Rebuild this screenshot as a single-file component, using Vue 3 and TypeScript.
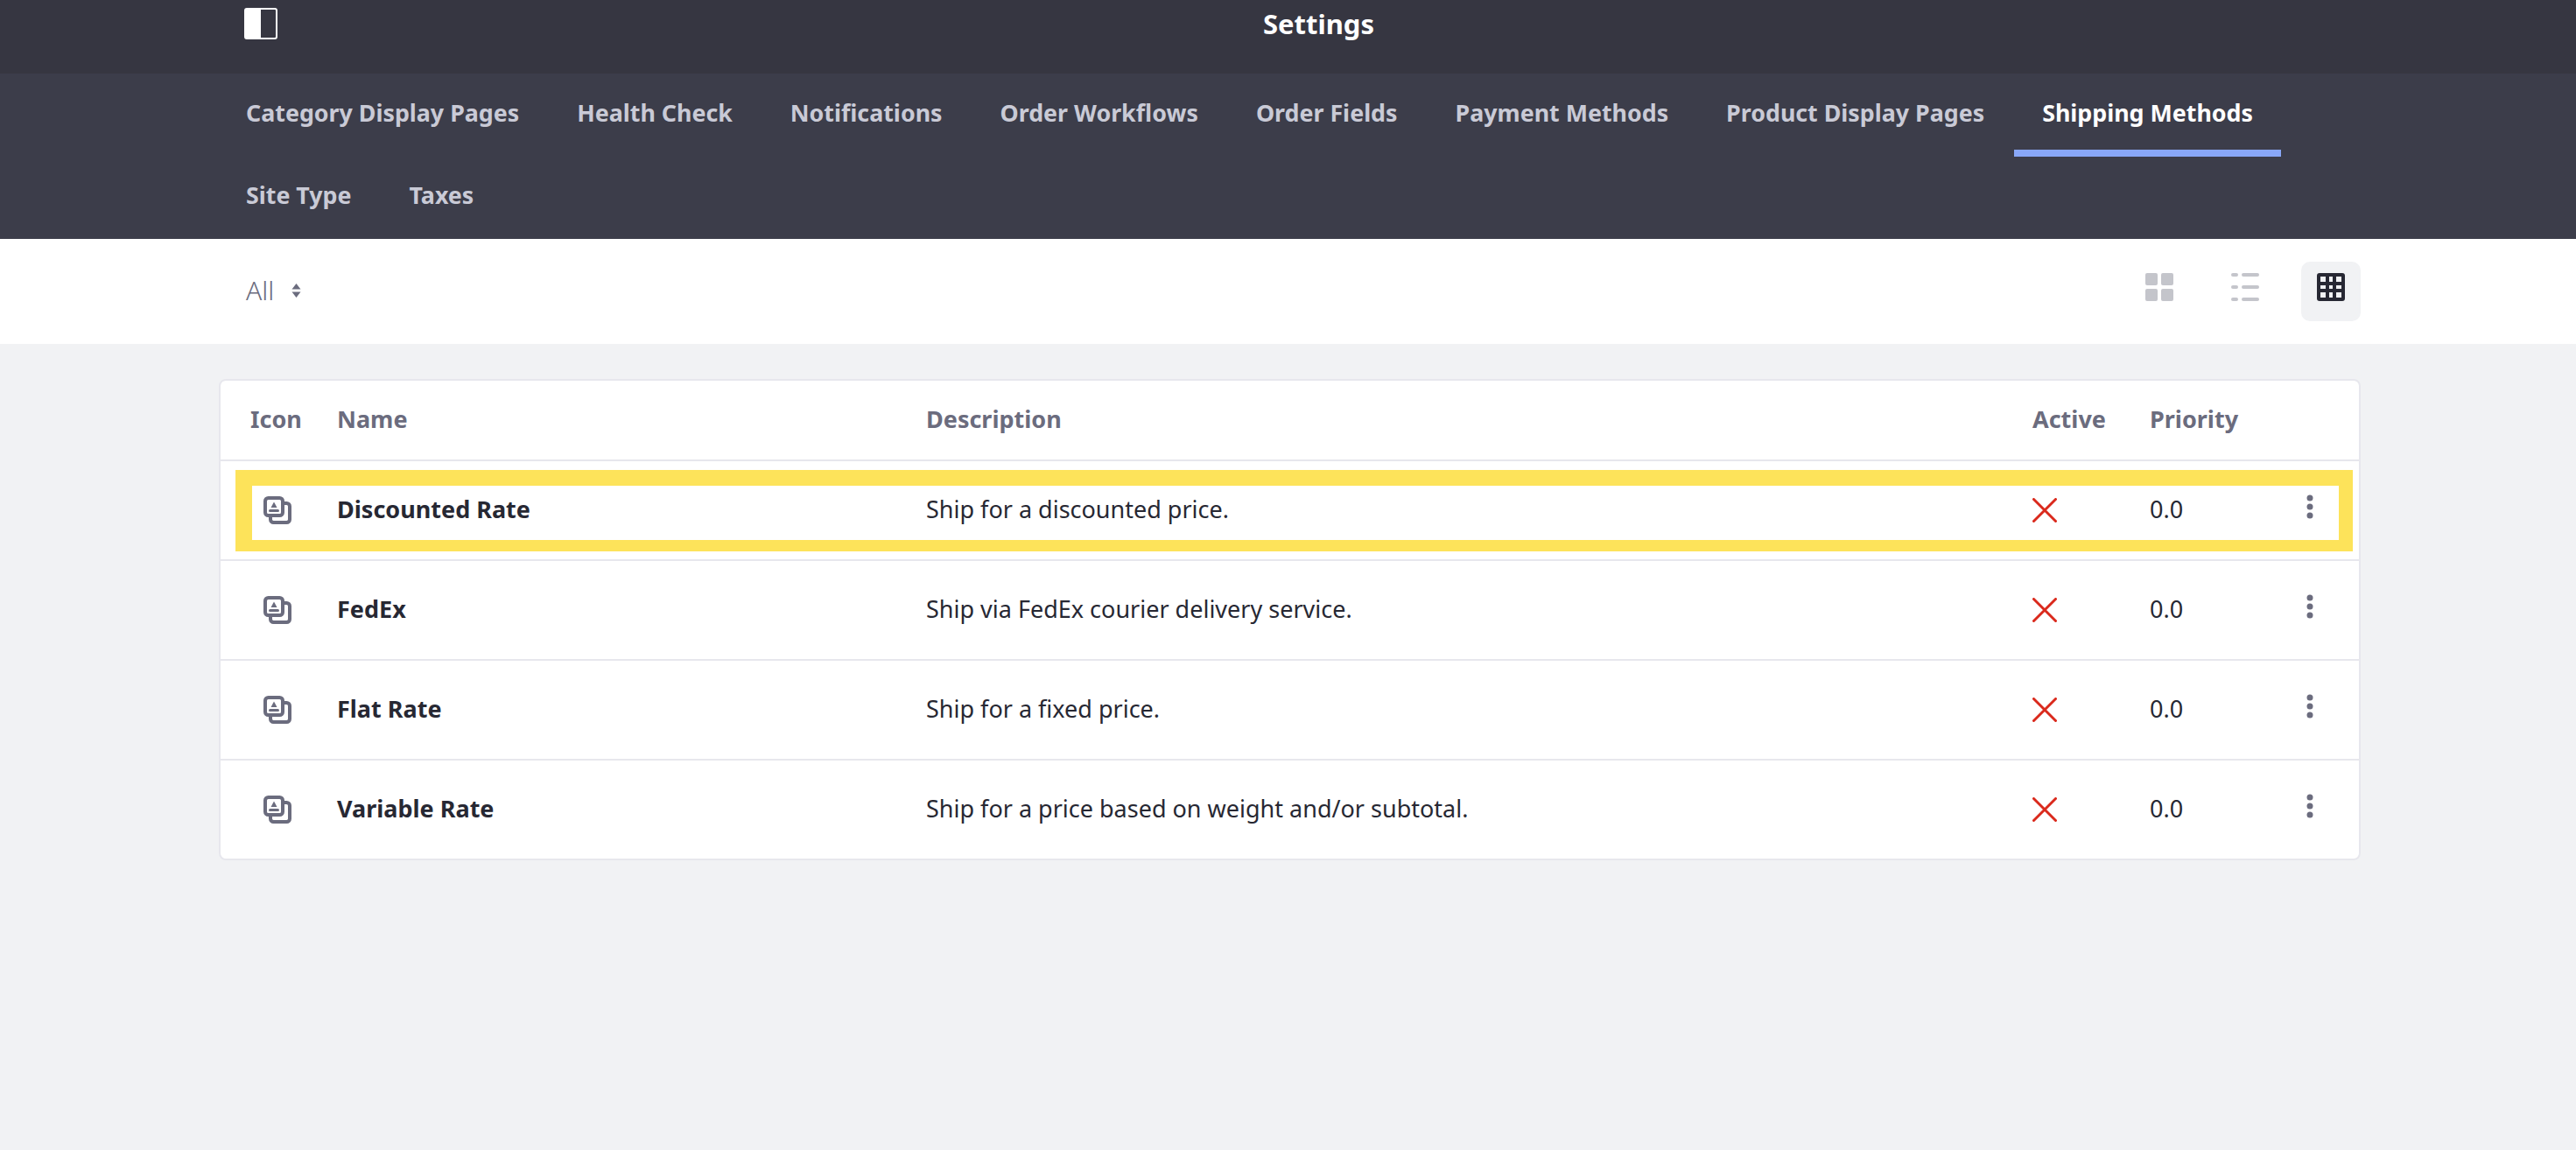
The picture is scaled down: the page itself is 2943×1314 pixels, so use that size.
<template>
  <div class="page">
    <header class="topbar">
      <svg class="sidebar-icon" width="38" height="36" viewBox="0 0 38 36">
        <rect x="1" y="1" width="36" height="34" rx="2" fill="none" stroke="#fff" stroke-width="2" />
        <rect x="1" y="1" width="18" height="34" fill="#fff" />
      </svg>
      <h1 class="title">Settings</h1>
    </header>

    <nav class="tabs">
      <a
        v-for="tab in tabs"
        :key="tab"
        class="tab"
        :class="{ active: tab === 'Shipping Methods' }"
      >{{ tab }}</a>
    </nav>

    <div class="toolbar">
      <div class="filter">
        <span>All</span>
        <svg width="11" height="16" viewBox="0 0 11 16">
          <path d="M5.5 0 L10.5 6.5 H0.5 Z M5.5 16 L10.5 9.5 H0.5 Z" fill="#6b6c7e" />
        </svg>
      </div>
      <div class="views">
        <button class="view">
          <svg width="32" height="32" viewBox="0 0 32 32" fill="#c4c5cb">
            <rect width="14" height="14" rx="2" />
            <rect x="18" width="14" height="14" rx="2" />
            <rect y="18" width="14" height="14" rx="2" />
            <rect x="18" y="18" width="14" height="14" rx="2" />
          </svg>
        </button>
        <button class="view">
          <svg width="32" height="32" viewBox="0 0 32 32" fill="#c4c5cb">
            <rect width="8" height="4" rx="2" />
            <rect x="12" width="20" height="4" rx="2" />
            <rect y="14" width="8" height="4" rx="2" />
            <rect x="12" y="14" width="20" height="4" rx="2" />
            <rect y="28" width="8" height="4" rx="2" />
            <rect x="12" y="28" width="20" height="4" rx="2" />
          </svg>
        </button>
        <button class="view selected">
          <svg width="32" height="32" viewBox="0 0 32 32">
            <rect width="32" height="32" rx="3" fill="#272833" />
            <g fill="#f1f2f4">
              <rect x="4" y="4" width="6" height="6" />
              <rect x="14" y="4" width="4" height="6" />
              <rect x="22" y="4" width="6" height="6" />
              <rect x="4" y="14" width="6" height="4" />
              <rect x="14" y="14" width="4" height="4" />
              <rect x="22" y="14" width="6" height="4" />
              <rect x="4" y="22" width="6" height="6" />
              <rect x="14" y="22" width="4" height="6" />
              <rect x="22" y="22" width="6" height="6" />
            </g>
          </svg>
        </button>
      </div>
    </div>

    <main class="content">
      <div class="card">
        <div class="row head">
          <span>Icon</span>
          <span class="name-col">Name</span>
          <span>Description</span>
          <span>Active</span>
          <span class="prio-col">Priority</span>
        </div>
        <div v-for="method in methods" :key="method.name" class="row">
          <svg class="method-icon" width="32" height="32" viewBox="0 0 32 32">
            <rect x="2" y="2" width="20" height="20" rx="3.5" fill="none" stroke="#6b6c7e" stroke-width="4" />
            <path d="M24 8 H26.5 A3.5 3.5 0 0 1 30 11.5 V26.5 A3.5 3.5 0 0 1 26.5 30 H11.5 A3.5 3.5 0 0 1 8 26.5 V24" fill="none" stroke="#6b6c7e" stroke-width="4" />
            <path d="M12 6.5 L15.5 13 H8.5 Z" fill="#6b6c7e" />
            <rect x="6" y="15" width="12" height="3" rx="1.5" fill="#6b6c7e" />
          </svg>
          <strong class="name name-col">{{ method.name }}</strong>
          <span class="desc">{{ method.description }}</span>
          <svg width="28" height="28" viewBox="0 0 28 28">
            <path d="M1.5 1.5 L26.5 26.5 M26.5 1.5 L1.5 26.5" stroke="#da291c" stroke-width="3" stroke-linecap="round" />
          </svg>
          <span class="desc prio-col">0.0</span>
          <svg class="kebab" width="8" height="28" viewBox="0 0 8 28" fill="#6b6c7e">
            <circle cx="4" cy="4" r="3.5" />
            <circle cx="4" cy="14" r="3.5" />
            <circle cx="4" cy="24" r="3.5" />
          </svg>
        </div>
        <div class="highlight"></div>
      </div>
    </main>
  </div>
</template>

<script setup lang="ts">
interface ShippingMethod {
  name: string;
  description: string;
}

const tabs: string[] = [
  'Category Display Pages',
  'Health Check',
  'Notifications',
  'Order Workflows',
  'Order Fields',
  'Payment Methods',
  'Product Display Pages',
  'Shipping Methods',
  'Site Type',
  'Taxes',
];

const methods: ShippingMethod[] = [
  { name: 'Discounted Rate', description: 'Ship for a discounted price.' },
  { name: 'FedEx', description: 'Ship via FedEx courier delivery service.' },
  { name: 'Flat Rate', description: 'Ship for a fixed price.' },
  { name: 'Variable Rate', description: 'Ship for a price based on weight and/or subtotal.' },
];
</script>

<style>
html,
body {
  margin: 0;
  background: #f1f2f4;
}
</style>

<style scoped>
.page {
  min-height: 1314px;
  background: #f1f2f4;
  font-family: "Noto Sans", "Open Sans", sans-serif;
  font-size: 27px;
  color: #272833;
}

.topbar {
  height: 84px;
  box-sizing: border-box;
  padding: 9px 247px 0 279px;
  display: flex;
  align-items: flex-start;
  background: #363641;
}

.title {
  flex: 1;
  margin: 0;
  text-align: center;
  color: #fff;
  font-size: 31px;
  font-weight: 700;
  line-height: 37px;
}

.tabs {
  height: 189px;
  box-sizing: border-box;
  padding: 1px 247px 0 249px;
  display: flex;
  flex-wrap: wrap;
  align-content: flex-start;
  column-gap: 2px;
  background: #3c3d4a;
}

.tab {
  height: 94px;
  box-sizing: border-box;
  padding: 25px 32px 0;
  color: #c9cad6;
  font-size: 26.8px;
  font-weight: 700;
  line-height: 38px;
  white-space: nowrap;
}

.tab.active {
  color: #fff;
  border-bottom: 8px solid #89a7f8;
}

.toolbar {
  height: 120px;
  box-sizing: border-box;
  padding: 26px 246px 0 281px;
  display: flex;
  justify-content: space-between;
  align-items: flex-start;
  background: #fff;
}

.filter {
  display: flex;
  align-items: center;
  gap: 20px;
  margin-top: 14px;
  color: #6b6c7e;
  font-size: 30px;
  font-weight: 300;
  line-height: 38px;
}

.views {
  display: flex;
  gap: 30px;
}

.view {
  width: 68px;
  height: 68px;
  padding: 13px 18px 23px;
  border: 0;
  border-radius: 10px;
  background: transparent;
  line-height: 0;
}

.view.selected {
  background: #f1f2f4;
}

.content {
  padding: 40px 246px 0 250px;
}

.card {
  position: relative;
  border: 2px solid #e7e7ed;
  border-radius: 8px;
  background: #fff;
}

.row {
  position: relative;
  height: 114px;
  box-sizing: border-box;
  display: grid;
  grid-template-columns: 134px 672px 1264px 135px 1fr;
  align-items: center;
  border-bottom: 2px solid #e7e7ed;
}

.row:nth-last-child(2) {
  height: 112px;
  border-bottom: 0;
}

.row.head {
  height: 92px;
  color: #6b6c7e;
  font-size: 27px;
  font-weight: 700;
}

.row.head span {
  padding-bottom: 3px;
}

.row.head span:first-child {
  padding-left: 34px;
}

.name-col,
.prio-col {
  margin-left: -1px;
}

.method-icon {
  margin-left: 49px;
}

.name,
.desc {
  font-size: 27px;
  padding-bottom: 4px;
}

.name {
  font-weight: 700;
}

.kebab {
  position: absolute;
  right: 52px;
  top: 38px;
}

/* yellow annotation drawn over the first row */
.highlight {
  position: absolute;
  left: 17px;
  top: 102px;
  width: 2419px;
  height: 93px;
  box-sizing: border-box;
  border-style: solid;
  border-color: #fde35a;
  border-width: 18px 16px 13px 19px;
  pointer-events: none;
}
</style>
